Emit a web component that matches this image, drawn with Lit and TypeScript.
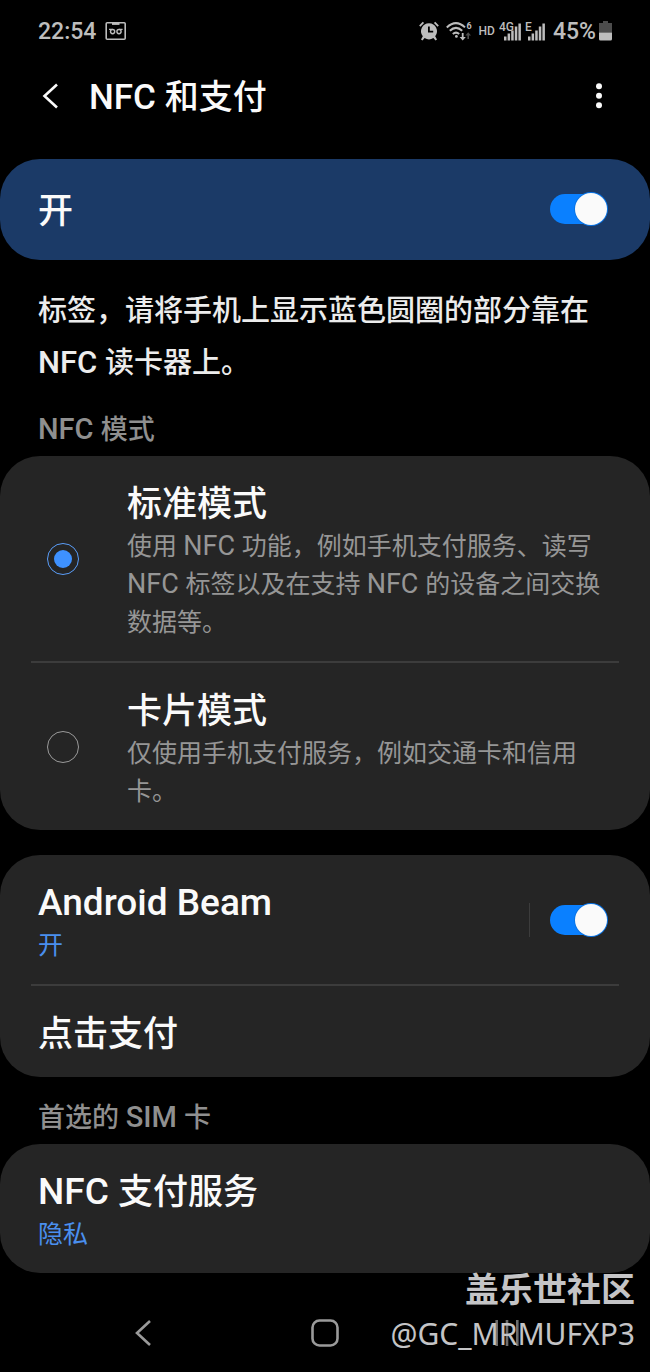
import { LitElement, html, css, svg } from "lit";
import { customElement, property, state } from "lit/decorators.js";

@customElement("status-bar")
export class StatusBar extends LitElement {
  static styles = css`
    :host {
      display: flex;
      align-items: center;
      justify-content: space-between;
      height: 62px;
      padding: 0 38px;
      color: #bdbdbd;
      font-size: 23px;
      line-height: 28px;
      font-weight: 500;
    }
    .group {
      display: flex;
      align-items: center;
      gap: 7px;
    }
    .clock {
      gap: 9px;
    }
    .signals,
    .battery {
      display: flex;
      align-items: center;
      gap: 4px;
    }
    .battery {
      gap: 3px;
      margin-left: 1px;
    }
    .value {
      padding-top: 2px;
    }
    svg {
      display: block;
      fill: currentColor;
    }
    .line {
      fill: none;
      stroke: currentColor;
    }
    .tiny {
      font-size: 12px;
      font-weight: 500;
    }
    .micro {
      font-size: 9px;
      font-weight: 700;
    }
    .dim {
      opacity: 0.4;
    }
  `;

  private signal(label: string, width: number) {
    const start = width - 17;
    return html`<svg width=${width} height="20" viewBox="0 0 ${width} 20" role="img" aria-label="${label} 信号">
      <text class="tiny" x="0" y="10">${label}</text>
      ${[4, 7, 10, 14, 17].map(
        (h, i) => svg`<rect x=${start + i * 3.6} y=${19.5 - h} width="2.5" height=${h} />`
      )}
    </svg>`;
  }

  render() {
    return html`
      <div class="group clock">
        <time class="value">22:54</time>
        <svg width="22" height="20" viewBox="0 0 22 20" aria-hidden="true">
          <rect class="line" x="1.2" y="1.7" width="19" height="16.6" rx="1" stroke-width="1.6" />
          <rect x="7" y="1.5" width="7.5" height="2.4" />
          <g class="line" stroke-width="1.4">
            <circle cx="7.6" cy="10.6" r="2.1" />
            <circle cx="14" cy="10.6" r="2.1" />
            <path d="M4 8.4h3.6M14 8.4h3.6" stroke-width="1.2" />
          </g>
        </svg>
      </div>
      <div class="group">
        <svg width="20" height="20" viewBox="0 0 20 20" aria-hidden="true">
          <path
            fill-rule="evenodd"
            d="M10 2.3a8 8 0 0 1 6.2 13l1.8 3.2-1.5 1-2.1-2.5a8 8 0 0 1-8.8 0l-2.1 2.5-1.5-1 1.8-3.2A8 8 0 0 1 10 2.3zM9 5.6v6h5.2V9.8h-3.4V5.6z"
          />
          <path class="line" d="M.8 5.2 4.4 1.4M15.6 1.4l3.6 3.8" stroke-width="1.8" />
        </svg>
        <svg width="26" height="20" viewBox="0 0 26 20" aria-hidden="true">
          <g class="line" stroke-width="2">
            <path d="M.8 6.4Q10 -2.2 19 6.4" />
            <path d="M3.8 9.7Q10 4 16.2 9.7" />
            <path d="M6.8 13Q10 10.2 13.2 13" />
          </g>
          <circle cx="10.4" cy="15.4" r="1.4" />
          <path d="M15.8 12h1.8v4h2.2l-3.1 3.4-3.1-3.4h2.2z" />
          <path class="dim" d="M21.4 18v-3.6h-2l2.8-3.2 2.8 3.2h-2V18z" />
          <text class="micro" x="20.5" y="7.5">6</text>
        </svg>
        <span class="signals">
          <span class="tiny">HD</span>
          ${this.signal("4G", 22)} ${this.signal("E", 20)}
        </span>
        <span class="battery">
          <span class="value">45%</span>
          <svg width="13" height="20" viewBox="0 0 13 20" aria-hidden="true">
            <path class="dim" d="M4 0h5v2h4v9.5H0V2h4z" />
            <path d="M0 11.5h13V18a1.5 1.5 0 0 1-1.5 1.5h-10A1.5 1.5 0 0 1 0 18z" />
          </svg>
        </span>
      </div>
    `;
  }
}

@customElement("toggle-switch")
export class ToggleSwitch extends LitElement {
  @property() label = "";
  @property({ type: Boolean }) checked = false;

  static styles = css`
    :host {
      display: flex;
    }
    .switch {
      appearance: none;
      display: flex;
      align-items: center;
      width: 57px;
      height: 30px;
      margin: 0;
      border-radius: 15px;
      background: #666;
      cursor: pointer;
    }
    .switch::before {
      content: "";
      flex: none;
      width: 32px;
      height: 32px;
      border-radius: 50%;
      background: #fafafa;
    }
    .switch:checked {
      justify-content: flex-end;
      background: #0a80ff;
    }
    .switch:checked::before {
      box-shadow: 0 0 0 1px #0a74e6;
    }
  `;

  render() {
    return html`<input
      class="switch"
      type="checkbox"
      role="switch"
      aria-label=${this.label}
      .checked=${this.checked}
    />`;
  }
}

/* Latin runs are set slightly larger than the Chinese text around them. */
const mixed = (text: string) =>
  text
    .split(/([A-Za-z][A-Za-z ]*)/)
    .filter(Boolean)
    .map((part) => (/^[A-Za-z]/.test(part) ? html`<span class="latin">${part}</span>` : part));

const MODES = [
  {
    id: "standard",
    title: "标准模式",
    text: "使用 NFC 功能，例如手机支付服务、读写 NFC 标签以及在支持 NFC 的设备之间交换数据等。",
  },
  {
    id: "card",
    title: "卡片模式",
    text: "仅使用手机支付服务，例如交通卡和信用卡。",
  },
];

@customElement("app-root")
export class AppRoot extends LitElement {
  @state() private mode = "standard";

  static styles = css`
    :host {
      position: relative;
      display: flex;
      flex-direction: column;
      min-height: 100vh;
      background: #000;
      color: #fafafa;
      font-family: Roboto, "Noto Sans CJK SC", sans-serif;
    }
    button {
      padding: 0;
      border: 0;
      background: none;
      color: inherit;
      font: inherit;
      text-align: left;
      cursor: pointer;
    }
    svg {
      display: block;
      fill: none;
      stroke: currentColor;
    }
    h1,
    h2,
    p {
      margin: 0;
    }
    .latin {
      line-height: 1;
    }
    .header {
      display: flex;
      align-items: center;
      height: 68px;
      margin-bottom: 29px;
      padding: 0 42px;
    }
    .header h1 {
      flex: 1;
      margin-left: 30px;
      padding-top: 2px;
      font-size: 34px;
      line-height: 46px;
      font-weight: 500;
    }
    .header .latin {
      font-size: 35px;
    }
    .dots {
      fill: currentColor;
      stroke: none;
    }
    .card {
      border-radius: 40px;
      background: #252525;
    }
    .master {
      display: flex;
      align-items: center;
      justify-content: space-between;
      min-height: 99px;
      padding: 0 43px 2px 38px;
      background: #1b3a67;
    }
    .text {
      display: block;
      padding-top: 6px;
    }
    .title {
      display: block;
      font-size: 35px;
      line-height: 46px;
      font-weight: 500;
    }
    .title .latin {
      font-size: 37px;
    }
    .hint {
      padding: 25px 42px 0 38px;
      color: #ececec;
      font-size: 29px;
      line-height: 52px;
      font-weight: 500;
    }
    .hint .latin {
      font-size: 31px;
    }
    .section {
      padding: 22px 38px 7px;
      color: #8f8f8f;
      font-size: 27px;
      line-height: 38px;
      font-weight: 500;
    }
    .section .latin {
      font-size: 29px;
    }
    .row {
      display: flex;
      align-items: center;
      box-sizing: border-box;
      width: 100%;
      padding: 20px 43px 19px 38px;
    }
    .option {
      padding-left: 47px;
      gap: 48px;
      cursor: pointer;
    }
    .rule {
      height: 2px;
      margin: 0 31px;
      border: 0;
      background: #3c3c3c;
    }
    .radio {
      appearance: none;
      display: grid;
      place-items: center;
      flex: none;
      width: 32px;
      height: 32px;
      margin: 0;
      border: 1px solid #9a9a9a;
      border-radius: 50%;
    }
    .radio:checked {
      border-color: #5a9df8;
    }
    .radio:checked::before {
      content: "";
      width: 18px;
      height: 18px;
      border-radius: 50%;
      background: #3e91ff;
    }
    .detail {
      display: block;
      color: #969696;
      font-size: 25px;
      line-height: 38px;
    }
    .detail .latin {
      font-size: 27px;
    }
    .accent {
      color: #4a8fee;
    }
    .grow {
      flex: 1;
    }
    .split {
      padding: 2px 0 2px 20px;
      border-left: 1px solid #3c3c3c;
    }
    .spaced {
      margin-top: 25px;
    }
    .nav {
      display: grid;
      grid-template-columns: repeat(3, 1fr);
      height: 78px;
      margin-top: auto;
      padding: 0 8%;
      color: #9a9a9a;
    }
    .nav button {
      display: grid;
      place-items: center;
    }
    .watermark {
      position: absolute;
      right: 15px;
      bottom: 16px;
      color: #c4c4c6;
      text-align: right;
      line-height: 44px;
      pointer-events: none;
    }
    .community {
      font-size: 34px;
      font-weight: 700;
    }
    .author {
      font-family: "Noto Sans", sans-serif;
      font-size: 30px;
    }
  `;

  render() {
    return html`
      <status-bar></status-bar>
      <header class="header">
        <button aria-label="返回">
          <svg width="17" height="26" viewBox="0 0 17 26" stroke-width="2.6">
            <path d="M15 1.5 2.5 13 15 24.5" />
          </svg>
        </button>
        <h1>${mixed("NFC 和支付")}</h1>
        <button aria-label="更多选项">
          <svg class="dots" width="18" height="26" viewBox="0 0 18 26">
            <circle cx="9" cy="3.3" r="3" />
            <circle cx="9" cy="12.8" r="3" />
            <circle cx="9" cy="22.3" r="3" />
          </svg>
        </button>
      </header>
      <main>
        <section class="card master">
          <span class="text"><span class="title">开</span></span>
          <toggle-switch label="NFC 和支付" checked></toggle-switch>
        </section>
        <p class="hint">${mixed("标签，请将手机上显示蓝色圆圈的部分靠在 NFC 读卡器上。")}</p>

        <h2 class="section" id="mode-heading">${mixed("NFC 模式")}</h2>
        <section class="card" role="radiogroup" aria-labelledby="mode-heading">
          ${MODES.map(
            (m, i) => html`
              ${i > 0 ? html`<hr class="rule" />` : null}
              <label class="row option">
                <input
                  class="radio"
                  type="radio"
                  name="mode"
                  .checked=${this.mode === m.id}
                  @change=${() => (this.mode = m.id)}
                />
                <span class="text grow">
                  <span class="title">${m.title}</span>
                  <span class="detail">${mixed(m.text)}</span>
                </span>
              </label>
            `
          )}
        </section>

        <section class="card spaced">
          <div class="row">
            <button class="text grow">
              <span class="title">${mixed("Android Beam")}</span>
              <span class="detail accent">开</span>
            </button>
            <span class="split">
              <toggle-switch label="Android Beam" checked></toggle-switch>
            </span>
          </div>
          <hr class="rule" />
          <button class="row">
            <span class="text"><span class="title">点击支付</span></span>
          </button>
        </section>

        <h2 class="section">${mixed("首选的 SIM 卡")}</h2>
        <section class="card">
          <button class="row">
            <span class="text">
              <span class="title">${mixed("NFC 支付服务")}</span>
              <span class="detail accent">隐私</span>
            </span>
          </button>
        </section>
      </main>
      <nav class="nav">
        <button aria-label="返回">
          <svg width="18" height="28" viewBox="0 0 18 28" stroke-width="2.6">
            <path d="M16 2 3 14l13 12" />
          </svg>
        </button>
        <button aria-label="主屏幕">
          <svg width="28" height="28" viewBox="0 0 28 28" stroke-width="2.6">
            <rect x="1.5" y="1.5" width="25" height="25" rx="7" />
          </svg>
        </button>
        <button aria-label="最近使用">
          <svg width="26" height="28" viewBox="0 0 26 28" stroke-width="2.6">
            <path d="M2.7 1v26M13 1v26M23.3 1v26" opacity=".7" />
          </svg>
        </button>
      </nav>
      <div class="watermark">
        <div class="community">盖乐世社区</div>
        <div class="author">@GC_MRMUFXP3</div>
      </div>
    `;
  }
}
